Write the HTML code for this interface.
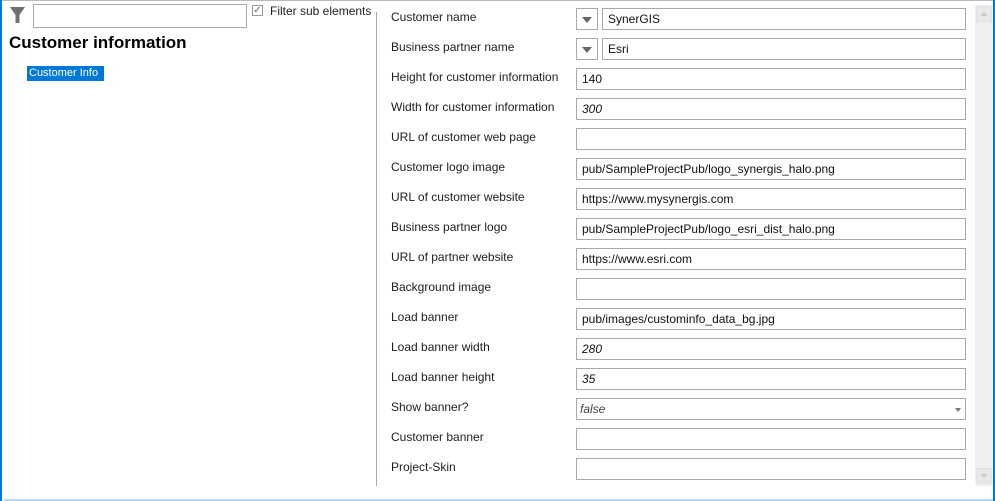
<!DOCTYPE html>
<html><head><style>
*{margin:0;padding:0;box-sizing:border-box}
body{width:995px;height:501px;background:#fff;position:relative;overflow:hidden;font-family:"Segoe UI","Liberation Sans",sans-serif;font-size:12px;color:#222}
.a{position:absolute}
.lbl{position:absolute;left:391px;font-size:12px;color:#1e1e1e;margin-top:2px;white-space:nowrap}
.in{position:absolute;left:576px;width:390px;height:22px;border:1px solid #a9a9a9;background:#fff;padding-left:5px;line-height:20px;font-size:12px;color:#111;white-space:nowrap}
.dd{position:absolute;left:576px;width:22px;height:22px;border:1px solid #a9a9a9;background:#fff}
.dd:after{content:"";position:absolute;left:5px;top:8px;border-left:5px solid transparent;border-right:5px solid transparent;border-top:6px solid #666}
i{font-style:italic}
</style></head><body>
<div class="a" style="left:0;top:0;width:995px;height:1px;background:#b9b9b9"></div>
<div class="a" style="left:0;top:0;width:2px;height:501px;background:#0078d7"></div>
<div class="a" style="left:993px;top:0;width:2px;height:501px;background:#0078d7"></div>
<div class="a" style="left:4px;top:499px;width:989px;height:2px;background:#b8d8f0"></div>
<svg class="a" style="left:10px;top:6px" width="16" height="18"><path d="M0 1H15L9.5 9V17H5.5V9Z" fill="#707070"/></svg>
<div class="a" style="left:33px;top:4px;width:214px;height:24px;border:1px solid #aaa"></div>
<div class="a" style="left:252px;top:5px;width:11px;height:11px;border:1px solid #999;font-size:10px;line-height:9px;color:#666;text-align:center">✓</div>
<div class="a" style="left:270px;top:4px;font-size:12px;white-space:nowrap">Filter sub elements</div>
<div class="a" style="left:9px;top:33px;font-size:17px;font-weight:bold;color:#000;white-space:nowrap">Customer information</div>
<div class="a" style="left:27px;top:66px;width:77px;height:15px;background:#0078d7;color:#fff;font-size:11px;line-height:15px;padding-left:2px;white-space:nowrap;overflow:hidden">Customer Info</div>
<div class="a" style="left:376px;top:12px;width:1px;height:474px;background:#aaa"></div>
<div class="a" style="left:975px;top:5px;width:18px;height:481px;background:#f0f0f0"></div>
<div class="a" style="left:976px;top:6px;width:16px;height:16px;background:#e8e8e8;border:1px solid #e0e0e0"></div>
<div class="a" style="left:980px;top:12px;border-left:4px solid transparent;border-right:4px solid transparent;border-bottom:4px solid #ccc"></div>
<div class="a" style="left:976px;top:468px;width:16px;height:16px;background:#e8e8e8;border:1px solid #e0e0e0"></div>
<div class="a" style="left:980px;top:474px;border-left:4px solid transparent;border-right:4px solid transparent;border-top:4px solid #ccc"></div>

<div class="lbl" style="top:8px">Customer name</div>
<div class="dd" style="top:8px"></div><div class="in" style="top:8px;left:602px;width:364px">SynerGIS</div>
<div class="lbl" style="top:38px">Business partner name</div>
<div class="dd" style="top:38px"></div><div class="in" style="top:38px;left:602px;width:364px">Esri</div>
<div class="lbl" style="top:68px">Height for customer information</div><div class="in" style="top:68px">140</div>
<div class="lbl" style="top:98px">Width for customer information</div><div class="in" style="top:98px"><i>300</i></div>
<div class="lbl" style="top:128px">URL of customer web page</div><div class="in" style="top:128px"></div>
<div class="lbl" style="top:158px">Customer logo image</div><div class="in" style="top:158px">pub/SampleProjectPub/logo_synergis_halo.png</div>
<div class="lbl" style="top:188px">URL of customer website</div><div class="in" style="top:188px">https://www.mysynergis.com</div>
<div class="lbl" style="top:218px">Business partner logo</div><div class="in" style="top:218px">pub/SampleProjectPub/logo_esri_dist_halo.png</div>
<div class="lbl" style="top:248px">URL of partner website</div><div class="in" style="top:248px">https://www.esri.com</div>
<div class="lbl" style="top:278px">Background image</div><div class="in" style="top:278px"></div>
<div class="lbl" style="top:308px">Load banner</div><div class="in" style="top:308px">pub/images/custominfo_data_bg.jpg</div>
<div class="lbl" style="top:338px">Load banner width</div><div class="in" style="top:338px"><i>280</i></div>
<div class="lbl" style="top:368px">Load banner height</div><div class="in" style="top:368px"><i>35</i></div>
<div class="lbl" style="top:398px">Show banner?</div><div class="in" style="top:398px;padding-left:3px;color:#444"><i>false</i><span style="position:absolute;right:4px;top:9px;border-left:3px solid transparent;border-right:3px solid transparent;border-top:4px solid #777"></span></div>
<div class="lbl" style="top:428px">Customer banner</div><div class="in" style="top:428px"></div>
<div class="lbl" style="top:458px">Project-Skin</div><div class="in" style="top:458px"></div>
</body></html>
